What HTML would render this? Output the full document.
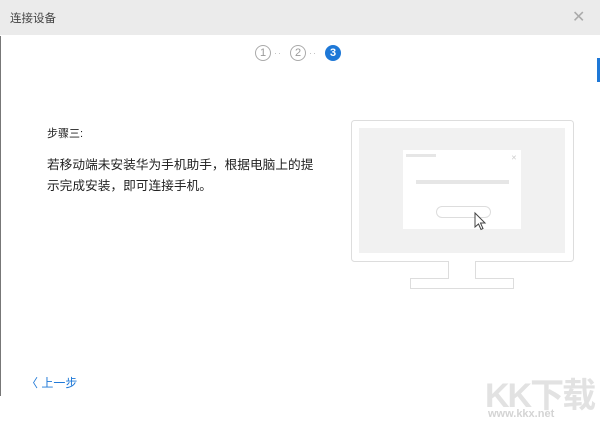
<!DOCTYPE html>
<html><head><meta charset="utf-8"><style>
body{margin:0;width:600px;height:426px;background:#fff;position:relative;overflow:hidden;font-family:"Liberation Sans","Noto Sans CJK SC",sans-serif;}
.hdr{position:absolute;left:0;top:0;width:600px;height:35px;background:#ebebeb;}
.t{position:absolute;left:10px;top:10px;font-size:11.5px;color:#444;}
.x{position:absolute;left:572px;top:7px;font-size:16px;color:#aaa;font-weight:300;}
.c{position:absolute;top:45px;width:16px;height:16px;border-radius:50%;box-sizing:border-box;font-size:11px;text-align:center;line-height:14px;}
.g{border:1px solid #aaa;color:#999;}
.b{background:#1e78d7;color:#fff;line-height:16px;font-weight:bold;}
.d{position:absolute;top:48px;font-size:9px;color:#bbb;letter-spacing:1px;}
.txt{position:absolute;left:47px;color:#222;}
</style></head><body>
<div class="hdr"><div class="t">连接设备</div><div class="x">✕</div></div>
<div style="position:absolute;left:0;top:36px;width:1px;height:360px;background:#777"></div>
<div style="position:absolute;left:597px;top:58px;width:3px;height:24px;background:#1e78d7"></div>
<div class="c g" style="left:255px">1</div><div class="d" style="left:274px">··</div>
<div class="c g" style="left:290px">2</div><div class="d" style="left:309px">··</div>
<div class="c b" style="left:325px">3</div>
<div class="txt" style="top:125px;font-size:11px">步骤三:</div>
<div class="txt" style="top:155px;line-height:21px;font-size:12.7px;">若移动端未安装华为手机助手，根据电脑上的提<br>示完成安装，即可连接手机。</div>
<svg style="position:absolute;left:0;top:0" width="600" height="426">
<rect x="351.5" y="120.5" width="222" height="141" rx="3" fill="#fff" stroke="#ddd"/>
<rect x="359" y="128" width="206" height="125" fill="#f1f1f1"/>
<rect x="403" y="150" width="118" height="79" fill="#fff"/>
<rect x="406" y="154" width="30" height="3" fill="#e6e6e6"/>
<text x="511" y="160" font-size="7" fill="#ccc">✕</text>
<rect x="416" y="180" width="93" height="4" fill="#e6e6e6"/>
<rect x="436.5" y="206.5" width="54" height="11" rx="5.5" fill="#fff" stroke="#ddd"/>
<path d="M475 213 L475 227 L478.5 224 L481 229.5 L483 228.5 L480.5 223 L485 223 Z" fill="#fff" stroke="#444" stroke-width="1"/>
<path d="M448.5 261 V278.5 H410.5 V288.5 H513.5 V278.5 H475.5 V261" fill="#fff" stroke="#ddd"/>
</svg>
<div style="position:absolute;left:26px;top:374px;color:#1e78d7;font-size:12px">〈 上一步</div>
<div style="position:absolute;left:485px;top:368px;font-size:34px;font-weight:bold;color:#e2e2e2;letter-spacing:-2px">KK下载</div>
<div style="position:absolute;left:488px;top:408px;font-size:11px;font-weight:bold;color:#d4d4d4">www.kkx.net</div>
</body></html>
